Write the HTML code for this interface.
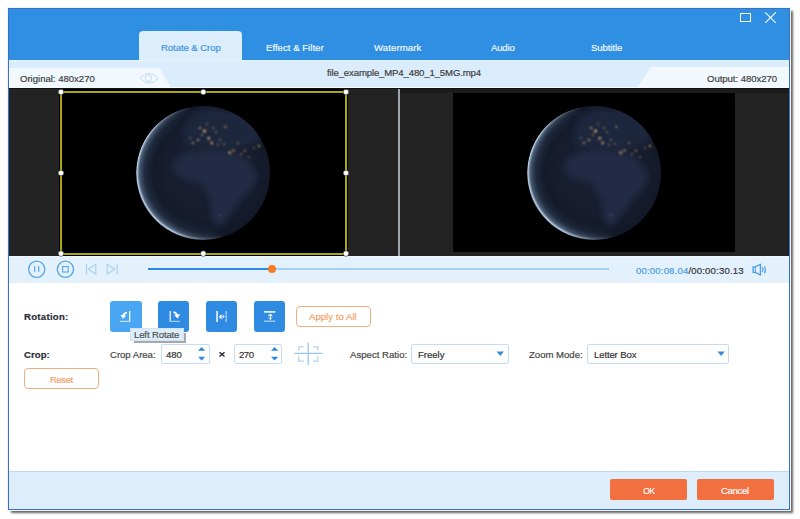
<!DOCTYPE html>
<html><head><meta charset="utf-8">
<style>
*{margin:0;padding:0;box-sizing:border-box}
html,body{width:800px;height:519px;overflow:hidden;background:#fefefe;font-family:"Liberation Sans",sans-serif;font-size:9.6px;color:#3c3c3c}
.a{position:absolute}
.t{position:absolute;white-space:nowrap;line-height:11px;font-size:9.6px;-webkit-text-stroke-width:0.18px}
#win{position:absolute;left:8px;top:8px;width:782px;height:502px;border:1px solid #3c70c0;background:#fff;box-shadow:0 0 0 1px #eef4fa,3px 3px 2px 0 rgba(0,0,0,.6)}
</style></head><body>
<div id="win"></div>
<!-- header -->
<div class="a" style="left:9px;top:9px;width:780px;height:51px;background:#2f8fe2"></div>
<div class="a" style="left:139px;top:31px;width:103px;height:30px;background:#dcedfc;border-radius:4px 4px 0 0"></div>
<div class="t" id="t0" style="left:161px;top:42px;letter-spacing:-0.083px;color:#3d94e3">Rotate &amp; Crop</div>
<div class="t" id="t1" style="left:266px;top:42px;letter-spacing:0.018px;color:#f2f8fe">Effect &amp; Filter</div>
<div class="t" id="t2" style="left:374px;top:42px;letter-spacing:0.094px;color:#f2f8fe">Watermark</div>
<div class="t" id="t3" style="left:491px;top:42px;letter-spacing:-0.188px;color:#f2f8fe">Audio</div>
<div class="t" id="t4" style="left:591px;top:42px;letter-spacing:-0.107px;color:#f2f8fe">Subtitle</div>
<!-- title icons -->
<svg class="a" style="left:735px;top:8px" width="50" height="20">
 <rect x="5.5" y="5.5" width="10" height="8" fill="none" stroke="#fff" stroke-width="1"/>
 <path d="M30.2 4.3 L40.8 14.9 M40.8 4.3 L30.2 14.9" stroke="#fff" stroke-width="1.15"/>
</svg>
<!-- info bar -->
<div class="a" style="left:9px;top:60px;width:780px;height:28px;background:#dbedfc"></div>
<div class="a" style="left:9px;top:60px;width:780px;height:1px;background:#e4f3fd"></div>
<svg class="a" style="left:9px;top:60px" width="780" height="28">
 <path d="M0 8 L151 8 L162 28 L0 28 Z" fill="#f1f8fe"/>
 <path d="M642 7 L780 7 L780 28 L628 28 Z" fill="#f1f8fe"/>
</svg>
<svg class="a" style="left:135px;top:68px" width="30" height="20">
 <g fill="none" stroke="#c4dcf0" stroke-width="1">
  <path d="M5 10.2 Q14 0.5 23 10.2 Q14 19.9 5 10.2 Z"/>
  <circle cx="13.5" cy="10.2" r="3.2"/>
 </g>
</svg>
<div class="a" style="left:9px;top:87px;width:780px;height:1px;background:#f6fbff"></div>
<div class="t" id="t5" style="left:20px;top:73px;letter-spacing:-0.025px;">Original: 480x270</div>
<div class="t" id="t6" style="left:327px;top:67px;letter-spacing:-0.148px;">file_example_MP4_480_1_5MG.mp4</div>
<div class="t" id="t7" style="left:707px;top:73px;letter-spacing:-0.061px;">Output: 480x270</div>
<!-- video area -->
<div class="a" style="left:9px;top:88px;width:780px;height:168px;background:#232323"></div>
<div class="a" style="left:9px;top:88px;width:780px;height:1px;background:#111"></div>
<div class="a" style="left:398px;top:89px;width:2px;height:167px;background:#9ea6ae"></div>
<div class="a" style="left:59px;top:89px;width:289px;height:167px;background:#000"></div>
<div class="a" style="left:400px;top:89px;width:389px;height:4px;background:#1c1c1c"></div>
<div class="a" style="left:453px;top:93px;width:282px;height:159px;background:#000"></div>
<svg class="a" style="left:128px;top:98px" width="150" height="150" viewBox="0 0 150 150">
 <defs>
  <radialGradient id="ega" gradientUnits="userSpaceOnUse" cx="82" cy="72" r="76">
   <stop offset="0" stop-color="#1c2336"/>
   <stop offset="0.6" stop-color="#171d2e"/>
   <stop offset="0.9" stop-color="#111726"/>
   <stop offset="1" stop-color="#0c111c"/>
  </radialGradient>
  <radialGradient id="rima" gradientUnits="userSpaceOnUse" cx="75.5" cy="74.5" r="67.2">
   <stop offset="0.74" stop-color="#40608a" stop-opacity="0"/>
   <stop offset="0.88" stop-color="#5a7aa0" stop-opacity="0.22"/>
   <stop offset="0.955" stop-color="#88a8c8" stop-opacity="0.5"/>
   <stop offset="0.99" stop-color="#c8dcf0" stop-opacity="0.95"/>
   <stop offset="1" stop-color="#c8dcf0" stop-opacity="0.6"/>
  </radialGradient>
  <linearGradient id="rma" gradientUnits="userSpaceOnUse" x1="5" y1="80" x2="85" y2="60">
   <stop offset="0" stop-color="#fff"/>
   <stop offset="0.3" stop-color="#fff"/>
   <stop offset="0.9" stop-color="#000"/>
  </linearGradient>
  <mask id="mka"><rect width="150" height="150" fill="url(#rma)"/></mask>
  <clipPath id="cla"><circle cx="75" cy="75" r="67"/></clipPath>
  <filter id="bla" x="-50%" y="-50%" width="200%" height="200%"><feGaussianBlur stdDeviation="0.8"/></filter>
  <filter id="bl2a" x="-20%" y="-20%" width="140%" height="140%"><feGaussianBlur stdDeviation="3"/></filter>
 </defs>
 <circle cx="75" cy="75" r="67" fill="url(#ega)"/>
 <g clip-path="url(#cla)">
  <g filter="url(#bl2a)">
   <path d="M49 60 L62 54 L82 52 L104 54 L117 60 L130 78 L122 92 L114 100 L103 116 L93 129 L85 124 L82 102 L75 86 L62 82 L50 78 L44 70 Z" fill="#222a44"/>
   <path d="M57 49 L72 48 L87 50 L104 52 L122 47 L134 42 L127 22 L107 12 L77 10 L62 17 L55 32 Z" fill="#1e263c"/>
  </g>
  <circle cx="75" cy="75" r="67" fill="url(#rima)" mask="url(#mka)"/>
 </g>
 <g fill="#e6b870" filter="url(#bla)">
  <circle cx="76.5" cy="33" r="1.5"/><circle cx="80.8" cy="40.3" r="1.3"/><circle cx="83.7" cy="45" r="1.2"/>
  <circle cx="97.4" cy="28.7" r="0.9"/><circle cx="101.7" cy="54.7" r="1.2"/><circle cx="105.4" cy="52.6" r="1"/>
  <circle cx="117" cy="52.6" r="0.9"/><circle cx="131" cy="48" r="1.1"/><circle cx="70" cy="42" r="1"/>
  <circle cx="65" cy="45" r="0.9"/><circle cx="88" cy="34" r="0.8"/><circle cx="92" cy="42" r="0.8"/>
  <circle cx="72" cy="30" r="1"/><circle cx="85" cy="30" r="0.8"/><circle cx="110" cy="45" r="0.8"/>
  <circle cx="74" cy="37" r="0.8"/><circle cx="90" cy="47" r="0.7"/><circle cx="96" cy="46" r="0.7"/><circle cx="113" cy="56" r="0.8"/>
  <circle cx="121" cy="59" r="0.7"/><circle cx="126" cy="50" r="0.7"/><circle cx="62" cy="40" r="0.7"/><circle cx="79" cy="26" r="0.7"/>
  <circle cx="92" cy="117" r="0.6"/>
 </g>
</svg>
<svg class="a" style="left:519px;top:98px" width="150" height="150" viewBox="0 0 150 150">
 <defs>
  <radialGradient id="egb" gradientUnits="userSpaceOnUse" cx="82" cy="72" r="76">
   <stop offset="0" stop-color="#1c2336"/>
   <stop offset="0.6" stop-color="#171d2e"/>
   <stop offset="0.9" stop-color="#111726"/>
   <stop offset="1" stop-color="#0c111c"/>
  </radialGradient>
  <radialGradient id="rimb" gradientUnits="userSpaceOnUse" cx="75.5" cy="74.5" r="67.2">
   <stop offset="0.74" stop-color="#40608a" stop-opacity="0"/>
   <stop offset="0.88" stop-color="#5a7aa0" stop-opacity="0.22"/>
   <stop offset="0.955" stop-color="#88a8c8" stop-opacity="0.5"/>
   <stop offset="0.99" stop-color="#c8dcf0" stop-opacity="0.95"/>
   <stop offset="1" stop-color="#c8dcf0" stop-opacity="0.6"/>
  </radialGradient>
  <linearGradient id="rmb" gradientUnits="userSpaceOnUse" x1="5" y1="80" x2="85" y2="60">
   <stop offset="0" stop-color="#fff"/>
   <stop offset="0.3" stop-color="#fff"/>
   <stop offset="0.9" stop-color="#000"/>
  </linearGradient>
  <mask id="mkb"><rect width="150" height="150" fill="url(#rmb)"/></mask>
  <clipPath id="clb"><circle cx="75" cy="75" r="67"/></clipPath>
  <filter id="blb" x="-50%" y="-50%" width="200%" height="200%"><feGaussianBlur stdDeviation="0.8"/></filter>
  <filter id="bl2b" x="-20%" y="-20%" width="140%" height="140%"><feGaussianBlur stdDeviation="3"/></filter>
 </defs>
 <circle cx="75" cy="75" r="67" fill="url(#egb)"/>
 <g clip-path="url(#clb)">
  <g filter="url(#bl2b)">
   <path d="M49 60 L62 54 L82 52 L104 54 L117 60 L130 78 L122 92 L114 100 L103 116 L93 129 L85 124 L82 102 L75 86 L62 82 L50 78 L44 70 Z" fill="#222a44"/>
   <path d="M57 49 L72 48 L87 50 L104 52 L122 47 L134 42 L127 22 L107 12 L77 10 L62 17 L55 32 Z" fill="#1e263c"/>
  </g>
  <circle cx="75" cy="75" r="67" fill="url(#rimb)" mask="url(#mkb)"/>
 </g>
 <g fill="#e6b870" filter="url(#blb)">
  <circle cx="76.5" cy="33" r="1.5"/><circle cx="80.8" cy="40.3" r="1.3"/><circle cx="83.7" cy="45" r="1.2"/>
  <circle cx="97.4" cy="28.7" r="0.9"/><circle cx="101.7" cy="54.7" r="1.2"/><circle cx="105.4" cy="52.6" r="1"/>
  <circle cx="117" cy="52.6" r="0.9"/><circle cx="131" cy="48" r="1.1"/><circle cx="70" cy="42" r="1"/>
  <circle cx="65" cy="45" r="0.9"/><circle cx="88" cy="34" r="0.8"/><circle cx="92" cy="42" r="0.8"/>
  <circle cx="72" cy="30" r="1"/><circle cx="85" cy="30" r="0.8"/><circle cx="110" cy="45" r="0.8"/>
  <circle cx="74" cy="37" r="0.8"/><circle cx="90" cy="47" r="0.7"/><circle cx="96" cy="46" r="0.7"/><circle cx="113" cy="56" r="0.8"/>
  <circle cx="121" cy="59" r="0.7"/><circle cx="126" cy="50" r="0.7"/><circle cx="62" cy="40" r="0.7"/><circle cx="79" cy="26" r="0.7"/>
  <circle cx="92" cy="117" r="0.6"/>
 </g>
</svg>
<!-- control bar -->
<div class="a" style="left:9px;top:256px;width:780px;height:27px;background:#e3f1fc"></div>
<div class="a" style="left:9px;top:256px;width:780px;height:1px;background:#eef7fe"></div>
<!-- crop frame -->
<svg class="a" style="left:50px;top:80px" width="310" height="185">
 <rect x="11" y="12" width="285" height="162" fill="none" stroke="#aca616" stroke-width="2"/>
 <g fill="#fff" stroke="#111" stroke-width="0.5">
  <circle cx="11" cy="12" r="2.8"/><circle cx="153.3" cy="12" r="2.8"/><circle cx="296" cy="12" r="2.8"/>
  <circle cx="11" cy="93" r="2.8"/><circle cx="296" cy="93" r="2.8"/>
  <circle cx="11" cy="173.6" r="2.8"/><circle cx="153.3" cy="173.6" r="2.8"/><circle cx="296" cy="173.6" r="2.8"/>
 </g>
</svg>
<!-- control icons -->
<svg class="a" style="left:20px;top:256px" width="110" height="26">
 <g fill="none" stroke="#5aa6ea" stroke-width="1.3">
  <circle cx="16.7" cy="13.2" r="8.1"/>
  <circle cx="45.4" cy="13.2" r="8.1"/>
  <path d="M14.7 10 V15.8 M18.7 10 V15.8" stroke-width="1.2"/>
  <rect x="42.6" y="10.6" width="5.6" height="5.4" stroke-width="1.1"/>
 </g>
 <g fill="none" stroke="#a8d0f2" stroke-width="1.1">
  <path d="M66.5 8.2 V18.2 M75.8 8.2 L68.2 13.2 L75.8 18.2 Z"/>
  <path d="M97.2 8.2 V18.2 M87.2 8.2 L94.8 13.2 L87.2 18.2 Z"/>
 </g>
</svg>
<div class="a" style="left:148px;top:268px;width:124px;height:2px;background:#2a8ae0"></div>
<div class="a" style="left:272px;top:268px;width:337px;height:2px;background:#a6d0f3"></div>
<div class="a" style="left:268px;top:265px;width:8px;height:8px;border-radius:50%;background:#f77b22"></div>
<div class="t" id="t8" style="left:636px;top:265px;letter-spacing:0.159px;color:#4a9ae4">00:00:08.04<span style="color:#333">/00:00:30.13</span></div>
<svg class="a" style="left:750px;top:260px" width="20" height="18">
 <g fill="none" stroke="#4a9be8" stroke-width="1.3">
  <path d="M3.1 6.9 H5.3 L10.4 4.5 V15 L5.3 12.4 H3.1 Z"/>
  <path d="M5.3 7 V12.3" stroke-width="1"/>
  <path d="M12.3 7.4 Q13.7 9.7 12.3 12 M14.4 6.2 Q16.5 9.7 14.4 13.2" stroke-width="1.2"/>
 </g>
</svg>

<!-- rotation -->
<div class="t" id="t9" style="left:24px;top:311px;letter-spacing:0.275px;font-weight:bold;color:#2b2b38;">Rotation:</div>
<div class="a" style="left:110px;top:301px;width:32px;height:31px;background:#4aa5f2;border-radius:3px"></div>
<div class="a" style="left:158px;top:301px;width:31px;height:31px;background:#2f8be2;border-radius:3px"></div>
<div class="a" style="left:206px;top:301px;width:31px;height:31px;background:#2f8be2;border-radius:3px"></div>
<div class="a" style="left:254px;top:301px;width:31px;height:31px;background:#2f8be2;border-radius:3px"></div>
<svg class="a" style="left:110px;top:301px" width="180" height="32">
 <g fill="none" stroke="#fff" stroke-width="1.2">
  <path d="M19.7 10 V20.8"/>
  <path d="M10 20.4 H19.1" stroke="#c4e2fb"/>
  <path d="M17 11.6 Q13.5 12 13 15.5" stroke-width="1.7"/>
  <path d="M11 14.2 L13 17.6 L15.6 14.6 Z" fill="#fff" stroke-width="0.6"/>
  <path d="M60.2 10 V20.8"/>
  <path d="M60.8 20.4 H69.8" stroke="#a8d0f4"/>
  <path d="M63.5 11.2 Q66.8 11.8 67.2 15" stroke-width="1.7"/>
  <path d="M64.6 14 L67.6 17.2 L69.6 13.6 Z" fill="#fff" stroke-width="0.6"/>
  <path d="M107.1 10 V21" stroke-width="1.5"/>
  <path d="M116.2 10 V21" stroke="#a8d0f4" stroke-width="1.3"/>
  <path d="M109.5 15.8 H114" stroke-width="1"/>
  <path d="M111.5 13.8 L109.6 15.8 L111.5 17.8" stroke-width="1.1"/>
  <path d="M112.6 13.6 L114.4 15.6 L112.6 17.4" stroke="#c4e2fb" stroke-width="1"/>
  <path d="M154 10.9 H165.3" stroke-width="1.5"/>
  <path d="M154 20.2 H165.3" stroke="#a8d0f4" stroke-width="1.3"/>
  <path d="M158.4 15.2 L160.4 13.2 L162.2 15.2" stroke-width="1.1"/>
  <path d="M160.4 13.5 V18.5" stroke-width="1"/>
  <path d="M158.6 16.8 L160.4 18.6 L162.2 16.8" stroke="#c4e2fb" stroke-width="1"/>
 </g>
</svg>
<div class="a" style="left:296px;top:306px;width:75px;height:21px;border:1.5px solid #f1ad82;border-radius:4px;background:#fff"></div>
<div class="t" id="t10" style="left:309px;top:311px;letter-spacing:0.018px;color:#f5a06a">Apply to All</div>
<!-- tooltip -->
<div class="a" style="left:134px;top:333px;width:52px;height:10px;background:#a8a8a8;filter:blur(0.6px)"></div>
<div class="a" style="left:130px;top:328px;width:54px;height:13px;background:#ddedfa;border:1px solid #cfe4f6"></div>
<div class="t" id="t11" style="left:134px;top:329px;letter-spacing:-0.150px;color:#505050">Left Rotate</div>
<!-- crop -->
<div class="t" id="t12" style="left:24px;top:349px;letter-spacing:0.050px;font-weight:bold;color:#2b2b38">Crop:</div>
<div class="t" id="t13" style="left:110px;top:349px;letter-spacing:-0.033px;color:#444">Crop Area:</div>
<div class="a" style="left:161px;top:344px;width:49px;height:20px;border:1px solid #c4ddf4;border-radius:2px;background:#fff"></div>
<div class="t" id="t14" style="left:166px;top:349px;letter-spacing:-0.100px;color:#333">480</div>
<svg class="a" style="left:212px;top:344px" width="20" height="20"><path d="M7.5 8.3 L12.5 12.5 M12.5 8.3 L7.5 12.5" stroke="#2a2a3a" stroke-width="1.5"/></svg>
<div class="a" style="left:234px;top:344px;width:48px;height:20px;border:1px solid #c4ddf4;border-radius:2px;background:#fff"></div>
<div class="t" id="t16" style="left:239px;top:349px;letter-spacing:-0.500px;color:#333">270</div>
<svg class="a" style="left:150px;top:340px" width="180" height="30">
 <g fill="#2a88e2">
  <path d="M48 10.8 L51.6 7.1 L55.2 10.8 Z"/>
  <path d="M48 16.8 L51.6 20.5 L55.2 16.8 Z"/>
  <path d="M121 10.8 L124.6 7.1 L128.2 10.8 Z"/>
  <path d="M121 16.8 L124.6 20.5 L128.2 16.8 Z"/>
 </g>
 <g fill="none" stroke="#9cc8ee" stroke-width="1.3">
  <path d="M158.2 2.7 V25 M144.3 13.4 H172.4"/>
 </g>
 <g fill="none" stroke="#b4d2ec" stroke-width="1.3">
  <path d="M148.8 10.5 V6.8 H153.8 M163.2 6.8 H167.8 V10.5 M148.8 16.2 V21.2 H153.8 M163.2 21.2 H167.8 V16.2"/>
 </g>
</svg>
<div class="a" style="left:24px;top:368px;width:75px;height:21px;border:1.5px solid #f1ad82;border-radius:4px;background:#fff"></div>
<div class="t" id="t17" style="left:50px;top:374px;letter-spacing:-0.475px;color:#f5a06a">Reset</div>
<div class="t" id="t18" style="left:350px;top:349px;letter-spacing:0.008px;color:#444">Aspect Ratio:</div>
<div class="a" style="left:411px;top:344px;width:98px;height:20px;border:1px solid #c4ddf4;border-radius:2px;background:#fff"></div>
<div class="t" id="t19" style="left:418px;top:349px;letter-spacing:-0.040px;color:#333">Freely</div>
<div class="t" id="t20" style="left:529px;top:349px;letter-spacing:-0.028px;color:#444">Zoom Mode:</div>
<div class="a" style="left:587px;top:344px;width:142px;height:20px;border:1px solid #c4ddf4;border-radius:2px;background:#fff"></div>
<div class="t" id="t21" style="left:594px;top:349px;letter-spacing:-0.144px;color:#333">Letter Box</div>
<svg class="a" style="left:490px;top:345px" width="240" height="18">
 <g fill="#2f8be2">
  <path d="M6.6 6.6 L13.9 6.6 L10.25 11 Z"/>
  <path d="M227.5 6.6 L234.8 6.6 L231.15 11 Z"/>
 </g>
</svg>
<!-- footer -->
<div class="a" style="left:9px;top:471px;width:780px;height:38px;background:#deedfc;border-top:1px solid #b9d9f6"></div>
<div class="a" style="left:610px;top:479px;width:77px;height:21px;background:#f26f3f;border-radius:2px"></div>
<div class="a" style="left:697px;top:479px;width:77px;height:21px;background:#f26f3f;border-radius:2px"></div>
<div class="t" id="t22" style="left:643px;top:485px;letter-spacing:-0.600px;transform:scaleX(0.92);transform-origin:0 0;color:#fff">OK</div>
<div class="t" id="t23" style="left:721px;top:485px;letter-spacing:-0.360px;color:#fff">Cancel</div>
</body></html>
